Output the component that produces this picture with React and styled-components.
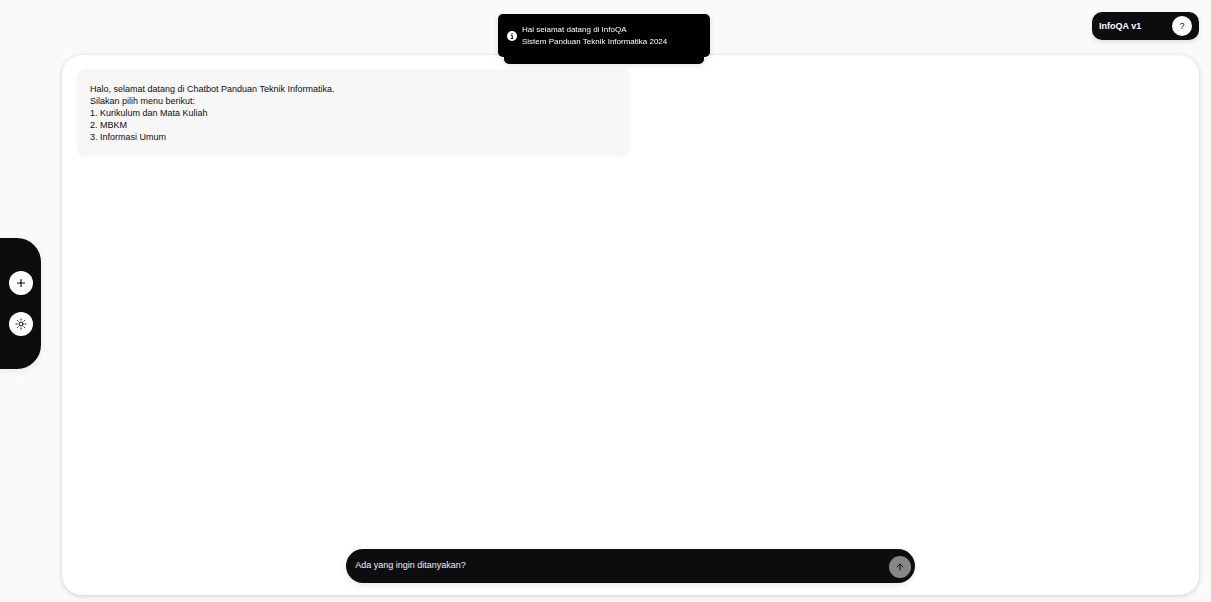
import React, { useState } from 'react';
import styled, { createGlobalStyle, css } from 'styled-components';

const GlobalStyle = createGlobalStyle`
  * {
    box-sizing: border-box;
  }

  body {
    margin: 0;
    background: #fafafa;
    color: #0d0d0d;
    font-family: 'Liberation Sans', Arial, sans-serif;
    font-size: 9px;
    line-height: 12px;
  }

  button,
  input {
    font: inherit;
  }
`;

const Page = styled.div`
  display: grid;
  grid-template-columns: auto minmax(0, 1fr);
  column-gap: 21px;
  height: 100vh;
  padding: 12px 12px 7px 0;
`;

const Sidebar = styled.nav`
  align-self: center;
  display: flex;
  flex-direction: column;
  gap: 17px;
  padding: 33px 8px 33px 9px;
  border-radius: 0 24px 24px 0;
  background: #0d0d0d;
  box-shadow: 0 3px 8px rgba(0, 0, 0, 0.06);
`;

const RoundButton = styled.button`
  display: flex;
  align-items: center;
  justify-content: center;
  flex-shrink: 0;
  width: ${props => props.$size}px;
  height: ${props => props.$size}px;
  padding: 0;
  border: 0;
  border-radius: 50%;
  background: #fff;
  color: #0d0d0d;
  cursor: pointer;

  &:disabled {
    background: #868686;
    cursor: default;
  }
`;

const Main = styled.main`
  display: flex;
  flex-direction: column;
  gap: 15px;
  min-height: 0;
`;

const Header = styled.header`
  display: flex;
  justify-content: flex-end;
`;

const VersionBadge = styled.div`
  display: flex;
  align-items: center;
  justify-content: space-between;
  min-width: 107px;
  height: 28px;
  padding: 0 7px;
  border-radius: 10px;
  background: #0d0d0d;
  color: #fff;
  box-shadow: 0 2px 5px rgba(0, 0, 0, 0.12);
`;

const VersionName = styled.strong`
  font-weight: 700;
`;

const ChatPanel = styled.section`
  flex: 1;
  display: flex;
  flex-direction: column;
  min-height: 0;
  padding-bottom: 12px;
  border-radius: 20px;
  background: #fff;
  box-shadow: 0 1px 5px rgba(0, 0, 0, 0.18);
`;

const MessageList = styled.div`
  flex: 1;
  padding: 14px;
  overflow-y: auto;
`;

const Message = styled.p`
  width: 50%;
  margin: 0;
  padding: 14px;
  border-radius: 10px;
  background: #f7f7f7;
  white-space: pre-line;
`;

const Composer = styled.form`
  align-self: center;
  display: flex;
  align-items: center;
  width: 50%;
  height: 34px;
  padding: 2px 4px 0 9px;
  border-radius: 17px;
  background: #0d0d0d;
  box-shadow: 0 2px 6px rgba(0, 0, 0, 0.1);
`;

const ComposerInput = styled.input`
  flex: 1;
  min-width: 0;
  padding: 0 0 4px;
  border: 0;
  outline: 0;
  background: transparent;
  color: #fff;

  &::placeholder {
    color: #f0f0f0;
    opacity: 1;
  }
`;

const toastSurface = css`
  border-radius: 5px;
  background: #000;
  box-shadow: 0 2px 6px rgba(0, 0, 0, 0.1);
`;

const ToastStack = styled.div`
  position: fixed;
  inset: 14px 3px auto 0;
  width: 212px;
  margin: 0 auto;

  &::before {
    content: '';
    position: absolute;
    inset: 6px 6px -7px;
    ${toastSurface};
  }
`;

const Toast = styled.div`
  position: relative;
  display: flex;
  align-items: center;
  gap: 5px;
  padding: 10px 9px 9px;
  color: #fff;
  font-size: 8px;
  white-space: pre-line;
  ${toastSurface};
`;

const Icon = ({ size, strokeWidth = 2, children }) => (
  <svg
    width={size}
    height={size}
    viewBox="0 0 24 24"
    fill="none"
    stroke="currentColor"
    strokeWidth={strokeWidth}
    strokeLinecap="round"
    strokeLinejoin="round"
    aria-hidden="true"
  >
    {children}
  </svg>
);

const PlusIcon = () => (
  <Icon size={12} strokeWidth={2.4}>
    <path d="M12 5v14M5 12h14" />
  </Icon>
);

const SunIcon = () => (
  <Icon size={12}>
    <circle cx="12" cy="12" r="4" />
    <path d="M12 2v2M12 20v2M2 12h2M20 12h2M4.9 4.9l1.4 1.4M17.7 17.7l1.4 1.4M4.9 19.1l1.4-1.4M17.7 6.3l1.4-1.4" />
  </Icon>
);

const ArrowUpIcon = () => (
  <Icon size={10} strokeWidth={2.4}>
    <path d="M12 19V5M5 12l7-7 7 7" />
  </Icon>
);

const InfoIcon = () => (
  <svg width="10" height="10" viewBox="0 0 20 20" aria-hidden="true">
    <circle cx="10" cy="10" r="10" fill="#fff" />
    <circle cx="10" cy="5.5" r="1.5" fill="#000" />
    <path d="M8 9h2.5v6M7.5 15h5" fill="none" stroke="#000" strokeWidth="2" />
  </svg>
);

const greeting = [
  'Halo, selamat datang di Chatbot Panduan Teknik Informatika.',
  'Silakan pilih menu berikut:',
  '1. Kurikulum dan Mata Kuliah',
  '2. MBKM',
  '3. Informasi Umum',
].join('\n');

const App = () => {
  const [question, setQuestion] = useState('');

  return (
    <>
      <GlobalStyle />
      <Page>
        <Sidebar>
          <RoundButton type="button" $size={24} aria-label="Chat baru">
            <PlusIcon />
          </RoundButton>
          <RoundButton type="button" $size={24} aria-label="Ganti tema">
            <SunIcon />
          </RoundButton>
        </Sidebar>
        <Main>
          <Header>
            <VersionBadge>
              <VersionName>InfoQA v1</VersionName>
              <RoundButton type="button" $size={20} aria-label="Bantuan">?</RoundButton>
            </VersionBadge>
          </Header>
          <ChatPanel>
            <MessageList>
              <Message>{greeting}</Message>
            </MessageList>
            <Composer onSubmit={e => e.preventDefault()}>
              <ComposerInput
                type="text"
                aria-label="Pertanyaan"
                placeholder="Ada yang ingin ditanyakan?"
                value={question}
                onChange={e => setQuestion(e.target.value)}
              />
              <RoundButton type="submit" $size={22} aria-label="Kirim" disabled={!question}>
                <ArrowUpIcon />
              </RoundButton>
            </Composer>
          </ChatPanel>
        </Main>
      </Page>
      <ToastStack role="status">
        <Toast>
          <InfoIcon />
          <span>{'Hai selamat datang di InfoQA\nSistem Panduan Teknik Informatika 2024'}</span>
        </Toast>
      </ToastStack>
    </>
  );
};

export default App;
